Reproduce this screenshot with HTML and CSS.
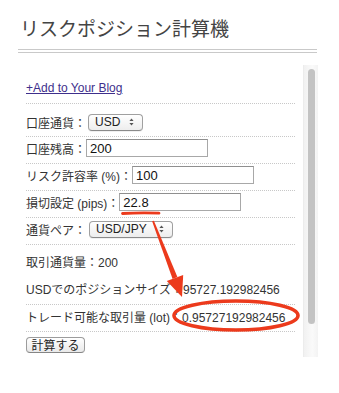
FILE: index.html
```html
<!DOCTYPE html>
<html lang="ja">
<head>
<meta charset="utf-8">
<title>リスクポジション計算機</title>
<link rel="stylesheet" href="styles.css">
</head>
<body>
<h1 class="title">リスクポジション計算機</h1>
<div class="rule"></div>
<div class="frame">
  <div class="content">
    <div class="blog"><a class="blog-link" href="#">+Add to Your Blog</a></div>
    <div class="row row-first">
      <span class="label">口座通貨：</span>
      <span class="select select-usd"><span class="select-text">USD</span><svg class="updown" width="5" height="8" viewBox="0 0 5 8"><path d="M2.5 0.5 L4.6 3 L0.4 3 Z M2.5 7.5 L4.6 5 L0.4 5 Z" fill="#555"/></svg></span>
    </div>
    <div class="row">
      <span class="label">口座残高：</span>
      <input class="field" type="text" value="200">
    </div>
    <div class="row">
      <span class="label">リスク許容率 (%)：</span>
      <input class="field" type="text" value="100">
    </div>
    <div class="row">
      <span class="label">損切設定 (pips)：</span>
      <input class="field" type="text" value="22.8">
    </div>
    <div class="row">
      <span class="label">通貨ペア：</span>
      <span class="select select-pair"><span class="select-text">USD/JPY</span><svg class="updown" width="5" height="8" viewBox="0 0 5 8"><path d="M2.5 0.5 L4.6 3 L0.4 3 Z M2.5 7.5 L4.6 5 L0.4 5 Z" fill="#555"/></svg></span>
    </div>
    <div class="results">
      <div class="result-line">取引通貨量：200</div>
      <div class="result-line">USDでのポジションサイズ：95727.192982456</div>
    </div>
    <div class="lot-row">トレード可能な取引量 (lot)：0.95727192982456</div>
    <div class="button-row"><button class="calc" type="button">計算する</button></div>
  </div>
  <div class="scrollbar"><div class="thumb"></div></div>
</div>
<svg class="marks" width="339" height="393" viewBox="0 0 339 393">
  <path d="M122.5 213.5 Q140 212.6 159 213.2" stroke="#ec3a1c" stroke-width="2.8" stroke-linecap="round" fill="none"/>
  <polygon points="153.9,220.7 152.1,221.3 172.6,278.9 177.4,277.1" fill="#ec3a1c"/>
  <polygon points="166.8,280.9 183.2,275.1 182,297" fill="#ec3a1c"/>
  <ellipse cx="236" cy="315.5" rx="62" ry="14.5" stroke="#ec3a1c" stroke-width="3.6" fill="none"/>
</svg>
</body>
</html>
```
FILE: styles.css
```css
html, body {
  margin: 0;
  padding: 0;
  background: #fff;
  overflow: hidden;
}

body {
  position: relative;
  width: 339px;
  height: 393px;
  font-family: "Liberation Sans", "Noto Sans CJK JP", sans-serif;
  font-size: 12px;
  color: #333;
}

.title {
  margin: 0;
  padding: 13px 0 0 20px;
  font-family: "Noto Sans CJK JP", sans-serif;
  font-size: 19px;
  font-weight: normal;
  line-height: 30px;
  color: #444;
}

.rule {
  margin: 6px 0 0 18px;
  width: 299px;
  height: 2px;
  border-top: 1px solid #c9c9c9;
  border-bottom: 1px solid #c9c9c9;
}

.frame {
  display: flex;
  margin: 12px 0 0 18px;
  width: 300px;
  height: 292px;
}

.content {
  flex: 1;
  padding: 0 8px;
}

.blog {
  padding: 15px 0 7px;
  line-height: 16px;
  border-bottom: 1px dotted #c8c8c8;
}

.blog-link {
  color: #3e2f8c;
  text-decoration: underline;
}

.row {
  display: flex;
  align-items: center;
  height: 18px;
  padding: 2px 0 6px;
  border-bottom: 1px dotted #c8c8c8;
}

.row-first {
  height: 16px;
  padding: 10px 0 6px;
}

.label {
  white-space: nowrap;
}

.field {
  box-sizing: border-box;
  width: 122px;
  height: 18px;
  margin: 0;
  padding: 0 3px;
  border: 1px solid #a8a8a8;
  border-top-color: #8f8f8f;
  font-family: "Liberation Sans", sans-serif;
  font-size: 13px;
  color: #111;
  background: #fff;
  outline: none;
}

.select {
  box-sizing: border-box;
  display: flex;
  align-items: center;
  justify-content: space-between;
  height: 17px;
  margin-left: 2px;
  padding: 0 8px 0 6px;
  border: 1px solid #a0a0a0;
  border-bottom-color: #8a8a8a;
  border-radius: 4px;
  background: linear-gradient(#ffffff, #ededed);
  box-shadow: 0 1px 0 rgba(0, 0, 0, 0.06);
  font-size: 12px;
  color: #222;
}

.select-usd {
  width: 55px;
}

.select-pair {
  width: 84px;
  margin-left: 3px;
}

.select-text {
  line-height: 15px;
}

.updown {
  display: block;
}

.results {
  padding-top: 5px;
  border-bottom: 1px dotted #c8c8c8;
}

.result-line {
  line-height: 27px;
  white-space: nowrap;
}

.lot-row {
  line-height: 26px;
  white-space: nowrap;
  border-bottom: 1px dotted #c8c8c8;
}

.button-row {
  padding-top: 5px;
}

.calc {
  box-sizing: border-box;
  display: block;
  height: 16px;
  width: 59px;
  margin: 0;
  padding: 0;
  border: 1px solid #9c9c9c;
  border-bottom-color: #858585;
  border-radius: 4px;
  background: linear-gradient(#ffffff, #e9e9e9);
  font-family: "Noto Sans CJK JP", sans-serif;
  font-size: 12px;
  line-height: 14px;
  color: #222;
}

.scrollbar {
  box-sizing: border-box;
  width: 15px;
  height: 292px;
  padding: 4px 0 0 4px;
  border-left: 1px solid #ececec;
  background: linear-gradient(to right, #f1f1f1, #fafafa 60%, #f3f3f3);
}

.thumb {
  width: 7px;
  height: 255px;
  border-radius: 4px;
  background: #c3c3c3;
}

.marks {
  position: absolute;
  top: 0;
  left: 0;
  pointer-events: none;
}
```
